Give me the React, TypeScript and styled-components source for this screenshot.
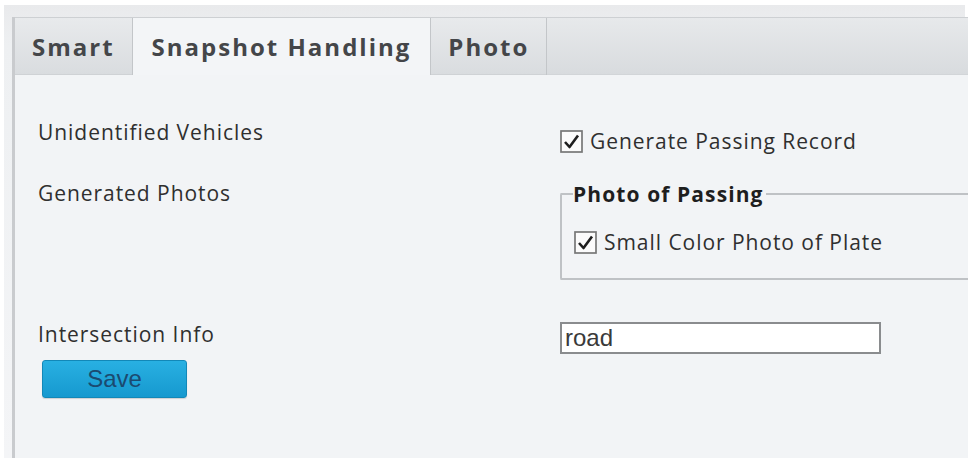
import React from "react";
import styled, { createGlobalStyle } from "styled-components";

const GlobalStyle = createGlobalStyle`
  html, body {
    margin: 0;
    padding: 0;
    background: #ffffff;
  }
  body {
    font-family: "Open Sans", "Noto Sans", sans-serif;
    color: #333333;
  }
`;

type TabItem = { label: string; active?: boolean };

const tabs: TabItem[] = [
  { label: "Smart" },
  { label: "Snapshot Handling", active: true },
  { label: "Photo" },
];

const Check: React.FC = () => (
  <svg width="23" height="23" viewBox="0 0 23 23">
    <rect x="1" y="1" width="21" height="21" fill="#fbfbfb" stroke="#777" strokeWidth="1.7" />
    <path d="M5 12 L9.5 17 L18 5.5" fill="none" stroke="#1e1e1e" strokeWidth="2.6" strokeLinejoin="round" />
  </svg>
);

export default function App() {
  return (
    <>
      <GlobalStyle />
      <Frame>
        <Panel>
          <TabBar>
            {tabs.map((t) => (
              <Tab key={t.label} $active={t.active}>
                {t.label}
              </Tab>
            ))}
            <TabFill />
          </TabBar>
          <Content>
            <LeftCol>
              <Label>Unidentified Vehicles</Label>
              <Label $gap={37}>Generated Photos</Label>
              <Label $gap={117}>Intersection Info</Label>
              <SaveButton>Save</SaveButton>
            </LeftCol>
            <RightCol>
              <CheckRow>
                <Check />
                <span>Generate Passing Record</span>
              </CheckRow>
              <Group>
                <Legend>Photo of Passing</Legend>
                <CheckRow>
                  <Check />
                  <span>Small Color Photo of Plate</span>
                </CheckRow>
              </Group>
              <TextInput defaultValue="road" />
            </RightCol>
          </Content>
        </Panel>
      </Frame>
    </>
  );
}

const Frame = styled.div`
  margin: 5px 0 0 4px;
  width: 961px;
  height: 453px;
  box-sizing: border-box;
  padding: 12px 0 0 8px;
  background: linear-gradient(#e9eaec, #eef0f2 40px, #f4f5f7);
`;

const Panel = styled.div`
  width: 953px;
  height: 441px;
  display: flex;
  flex-direction: column;
  border-left: 3px solid #c9cbce;
  overflow: hidden;
`;

const TabBar = styled.div`
  display: flex;
  height: 57px;
  flex-shrink: 0;
  border-top: 1px solid #cdd0d3;
  background: linear-gradient(#e7e9eb, #d8dbde);
  box-shadow: inset 0 -1px 0 #d2d5d8;
`;

const Tab = styled.div<{ $active?: boolean }>`
  display: flex;
  align-items: center;
  padding: 0 ${(p) => (p.$active ? "19px" : "17px")};
  font-size: 24px;
  font-weight: 700;
  letter-spacing: 2px;
  color: #444649;
  border-right: 1px solid #c3c6c9;
  background: ${(p) => (p.$active ? "#f3f5f7" : "linear-gradient(#e8eaec, #d9dcdf)")};
  box-shadow: ${(p) => (p.$active ? "none" : "inset 0 -1px 0 #cfd2d5")};
`;

const TabFill = styled.div`
  flex: 1;
`;

const Content = styled.div`
  flex: 1;
  display: grid;
  grid-template-columns: 522px 1fr;
  background: #f2f4f6;
  padding-left: 23px;
`;

const LeftCol = styled.div`
  display: flex;
  flex-direction: column;
  align-items: flex-start;
  padding-top: 45px;
`;

const RightCol = styled.div`
  display: flex;
  flex-direction: column;
  align-items: flex-start;
  padding-top: 54px;
`;

const Label = styled.div<{ $gap?: number }>`
  font-size: 21px;
  letter-spacing: 0.95px;
  line-height: 24px;
  color: #2f2f2f;
  margin-top: ${(p) => p.$gap ?? 0}px;
`;

const SaveButton = styled.button`
  margin: 14px 0 0 4px;
  width: 145px;
  height: 38px;
  border: 1px solid #1288b8;
  border-radius: 3px;
  background: linear-gradient(#28b0e2, #1699cf);
  color: #1b4a70;
  font-family: "Liberation Sans", Arial, sans-serif;
  font-size: 24px;
  padding: 0;
  box-shadow: 0 1px 1px rgba(0, 0, 0, 0.15);
`;

const CheckRow = styled.label`
  display: flex;
  align-items: center;
  gap: 7px;
  height: 24px;
  font-size: 21px;
  letter-spacing: 0.95px;
  color: #2f2f2f;
`;

const Group = styled.fieldset`
  margin: 29px 0 0 0;
  width: 440px;
  height: 98px;
  box-sizing: border-box;
  padding: 24px 0 0 12px;
  border: 2px solid #bfc2c5;
  border-right: none;
  border-radius: 2px;
`;

const Legend = styled.legend`
  padding: 0 2px 0 0;
  margin-left: -1px;
  font-size: 21px;
  font-weight: 700;
  letter-spacing: 1.1px;
  line-height: 24px;
  color: #1e1e1e;
`;

const TextInput = styled.input`
  margin-top: 42px;
  width: 321px;
  height: 32px;
  box-sizing: border-box;
  border: 2px solid #8a8c8e;
  background: #ffffff;
  padding: 0 3px;
  font-family: "Liberation Sans", Arial, sans-serif;
  font-size: 24px;
  color: #3a3a3a;
`;
